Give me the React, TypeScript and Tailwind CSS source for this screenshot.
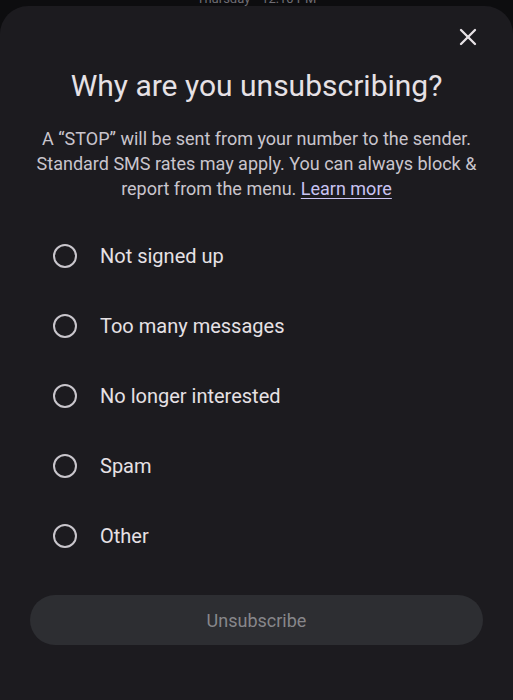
import { X } from "lucide-react";

const OPTIONS = [
  "Not signed up",
  "Too many messages",
  "No longer interested",
  "Spam",
  "Other",
];

export default function App() {
  return (
    <div
      className="flex h-[700px] w-[513px] flex-col overflow-hidden bg-[#0d0d0f]"
      style={{ fontFamily: "Roboto, 'Noto Sans', Arial, sans-serif" }}
    >
      {/* timestamp of the conversation behind the sheet, mostly hidden */}
      <div className="flex h-[6px] items-end justify-center overflow-hidden">
        <span className="-translate-y-[1px] text-[13px] leading-[13px] text-[#6f6d74]">
          Thursday • 12:10 PM
        </span>
      </div>

      <div className="flex flex-1 flex-col rounded-t-[28px] bg-[#1c1b1f]">
        <div className="flex justify-end pr-[31px] pt-[17px]">
          <button className="text-[#e6e1e5]">
            <X className="h-[28px] w-[28px]" strokeWidth={2} />
          </button>
        </div>

        <h1 className="mt-[18px] text-center text-[30px] leading-[34px] text-[#e6e1e5]">
          Why are you unsubscribing?
        </h1>

        <p className="mx-auto mt-[23px] w-[470px] text-center text-[18px] leading-[25px] text-[#c9c5cd]">
          A “STOP” will be sent from your number to the sender. Standard SMS
          rates may apply. You can always block &amp; report from the menu.{" "}
          <a className="text-[#c9c3f2] underline underline-offset-[3px]">
            Learn more
          </a>
        </p>

        <div className="mt-[41px] flex flex-col gap-[42px] pl-[53px]">
          {OPTIONS.map((label) => (
            <label key={label} className="flex h-[28px] items-center gap-[23px]">
              <span className="h-[24px] w-[24px] rounded-full border-2 border-[#c9c6cc]" />
              <span className="text-[20px] text-[#e6e1e5]">{label}</span>
            </label>
          ))}
        </div>

        <div className="mt-[45px] px-[30px]">
          <button
            disabled
            className="h-[50px] w-full rounded-full bg-[#2d2e32] text-[18px] text-[#87878b]"
          >
            Unsubscribe
          </button>
        </div>
      </div>
    </div>
  );
}
